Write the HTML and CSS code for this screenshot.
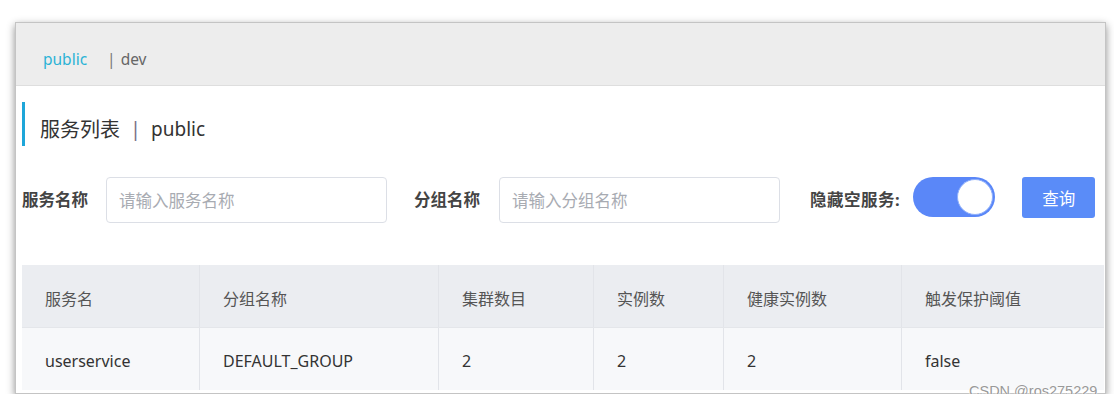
FILE: index.html
```html
<!DOCTYPE html>
<html lang="zh-CN">
<head>
    <meta charset="UTF-8">
    <meta name="viewport" content="width=device-width, initial-scale=1.0">
    <title>服务列表</title>
    <link rel="stylesheet" href="styles.css">
</head>
<body>
    <div class="page">
        <div class="panel">
            <div class="ns-bar">
                <span class="ns-item active">public</span>
                <span class="ns-sep">|</span>
                <span class="ns-item">dev</span>
            </div>
            <div class="main">
                <h2 class="page-title">服务列表<span class="title-sep">|</span><span class="title-ns">public</span></h2>

                <form class="filter-row">
                    <label class="filter-label" for="serviceName">服务名称</label>
                    <input class="filter-input" type="text" id="serviceName" placeholder="请输入服务名称">
                    <label class="filter-label group-label" for="groupName">分组名称</label>
                    <input class="filter-input group" type="text" id="groupName" placeholder="请输入分组名称">
                    <span class="filter-label hide-label">隐藏空服务:</span>
                    <span class="switch on"><span class="switch-knob"></span></span>
                    <button type="button" class="query-btn">查询</button>
                </form>

                <table class="service-table">
                    <thead>
                        <tr>
                            <th class="col-name">服务名</th>
                            <th class="col-group">分组名称</th>
                            <th class="col-cluster">集群数目</th>
                            <th class="col-inst">实例数</th>
                            <th class="col-healthy">健康实例数</th>
                            <th>触发保护阈值</th>
                        </tr>
                    </thead>
                    <tbody>
                        <tr>
                            <td>userservice</td>
                            <td>DEFAULT_GROUP</td>
                            <td>2</td>
                            <td>2</td>
                            <td>2</td>
                            <td>false</td>
                        </tr>
                    </tbody>
                </table>
            </div>
        </div>
        <div class="watermark">CSDN @ros275229</div>
    </div>
</body>
</html>
```

FILE: styles.css
```css
body {
    margin: 0;
    background-color: #ffffff;
    font-family: "Noto Sans", "Noto Sans CJK SC", sans-serif;
    color: #333333;
}
.page {
    position: relative;
    padding: 22px 0 0 15px;
}
.panel {
    width: 1091px;
    height: 372px;
    box-sizing: border-box;
    border: 1px solid #c4c4c4;
    box-shadow: 0 3px 8px rgba(0, 0, 0, 0.45);
    background-color: #ffffff;
    overflow: hidden;
}
.ns-bar {
    height: 63px;
    box-sizing: border-box;
    padding: 10px 0 0 27px;
    background-color: #ededed;
    border-bottom: 1px solid #dedede;
    display: flex;
    align-items: center;
    font-size: 15.5px;
    color: #666666;
}
.ns-item.active {
    color: #2bb3d6;
}
.ns-sep {
    margin: 0 5px 0 20px;
    color: #777777;
}
.main {
    padding-left: 6px;
}
.page-title {
    margin: 16px 0 0 0;
    height: 44px;
    box-sizing: border-box;
    border-left: 3px solid #1ea6d9;
    padding: 9px 0 0 15px;
    display: flex;
    align-items: center;
    font-size: 20px;
    font-weight: normal;
    color: #333333;
}
.title-sep {
    margin: 0 10px 0 10px;
    color: #777088;
}
.title-ns {
    font-size: 19px;
}
.filter-row {
    margin: 31px 0 0 0;
    display: flex;
    align-items: flex-start;
}
.filter-label {
    line-height: 46px;
    font-size: 16.5px;
    font-weight: bold;
    color: #444444;
    margin-right: 18px;
}
.group-label {
    margin-right: 19px;
}
.filter-input {
    width: 281px;
    height: 46px;
    box-sizing: border-box;
    border: 1px solid #dcdfe6;
    border-radius: 4px;
    padding: 0 12px;
    font-size: 16.5px;
    font-family: inherit;
    margin-right: 27px;
    outline: none;
}
.filter-input.group {
    width: 281px;
    margin-right: 30px;
}
.filter-input::placeholder {
    color: #a8abb2;
}
.hide-label {
    margin-right: 13px;
    letter-spacing: 0.5px;
}
.switch {
    width: 82px;
    height: 40px;
    box-sizing: border-box;
    border-radius: 20px;
    background-color: #5a87f8;
    display: flex;
    align-items: center;
    justify-content: flex-end;
    padding-right: 2px;
    margin-right: 27px;
}
.switch-knob {
    width: 36px;
    height: 36px;
    box-sizing: border-box;
    border-radius: 50%;
    background-color: #ffffff;
    border: 1px solid #8fb0fb;
}
.query-btn {
    width: 73px;
    height: 41px;
    border: none;
    border-radius: 3px;
    background-color: #5a8cf8;
    color: #ffffff;
    font-size: 16.5px;
    font-family: inherit;
}
.service-table {
    margin-top: 42px;
    width: 1082px;
    border-collapse: collapse;
    font-size: 16px;
}
.service-table th,
.service-table td {
    padding: 0 0 0 23px;
    text-align: left;
    border-right: 1px solid #e2e4e9;
}
.service-table th:last-child,
.service-table td:last-child {
    border-right: none;
}
.service-table th {
    height: 59px;
    padding-top: 3px;
    background-color: #ebedf1;
    font-weight: normal;
    color: #555555;
    border-bottom: 1px solid #e4e6ea;
}
.service-table td {
    height: 58px;
    padding-top: 4px;
    background-color: #f7f8fa;
    color: #333333;
}
.col-name { width: 154px; }
.col-group { width: 215px; }
.col-cluster { width: 131px; }
.col-inst { width: 106px; }
.col-healthy { width: 154px; }
.watermark {
    position: absolute;
    left: 969px;
    top: 383px;
    font-family: "Liberation Sans", sans-serif;
    font-size: 14.5px;
    color: #999999;
    text-shadow: 0 0 2px #ffffff, 0 0 1px #ffffff;
}
```
